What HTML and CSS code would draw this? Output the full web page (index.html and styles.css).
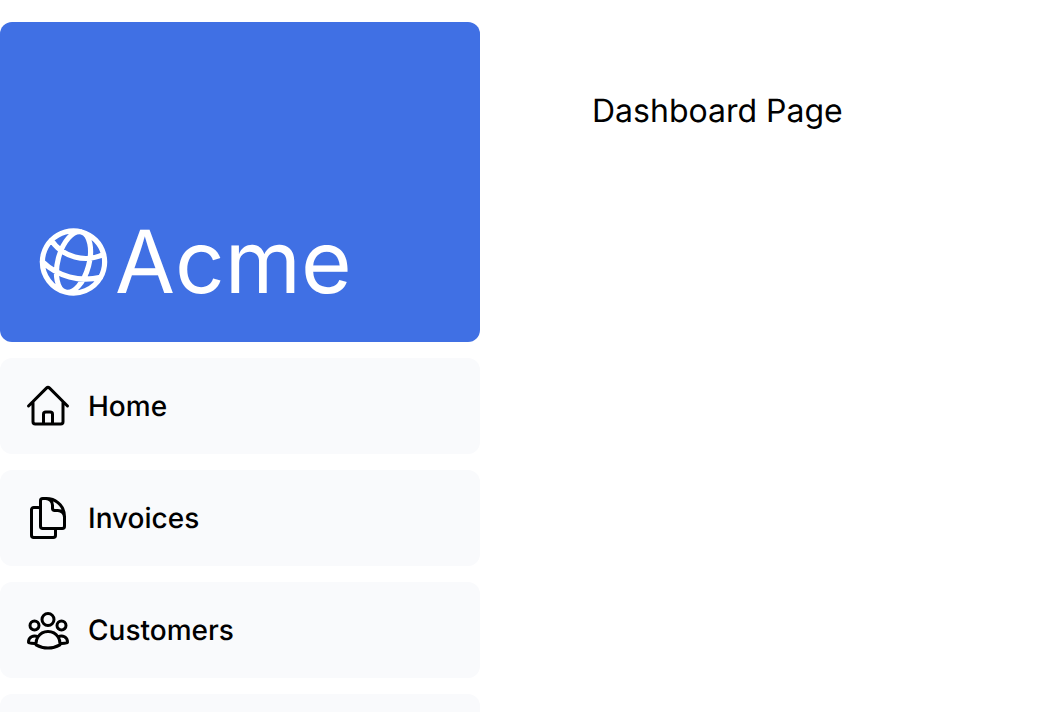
FILE: index.html
```html
<!DOCTYPE html>
<html lang="en">
<head>
<meta charset="utf-8">
<meta name="viewport" content="width=device-width, initial-scale=1">
<title>Acme Dashboard</title>
<link rel="stylesheet" href="styles.css">
</head>
<body>
<div class="layout">
  <aside class="sidebar">
    <a class="brand" href="#">
      <svg class="brand-icon" viewBox="0 0 24 24" fill="none" stroke="currentColor" stroke-width="1.5" stroke-linecap="round" stroke-linejoin="round" aria-hidden="true"><path d="M12 21a9.004 9.004 0 0 0 8.716-6.747M12 21a9.004 9.004 0 0 1-8.716-6.747M12 21c2.485 0 4.5-4.03 4.5-9S14.485 3 12 3m0 18c-2.485 0-4.5-4.03-4.5-9S9.515 3 12 3m0 0a8.997 8.997 0 0 1 7.843 4.582M12 3a8.997 8.997 0 0 0-7.843 4.582m15.686 0A11.953 11.953 0 0 1 12 10.5c-2.998 0-5.74-1.1-7.843-2.918m15.686 0A8.959 8.959 0 0 1 21 12c0 .778-.099 1.533-.284 2.253m0 0A17.919 17.919 0 0 1 12 16.5a17.92 17.92 0 0 1-8.716-2.247m0 0A9.015 9.015 0 0 1 3 12c0-1.605.42-3.113 1.157-4.418"/></svg>
      <span class="brand-name">Acme</span>
    </a>
    <nav class="nav">
      <a class="nav-link" href="#">
        <svg class="nav-icon" viewBox="0 0 24 24" aria-hidden="true"><path d="m2.25 12 8.954-8.955a1.126 1.126 0 0 1 1.591 0L21.75 12M4.5 9.75v10.125c0 .621.504 1.125 1.125 1.125H9.75v-4.875c0-.621.504-1.125 1.125-1.125h2.25c.621 0 1.125.504 1.125 1.125V21h4.125c.621 0 1.125-.504 1.125-1.125V9.75M8.25 21h8.25"/></svg>
        <span>Home</span>
      </a>
      <a class="nav-link" href="#">
        <svg class="nav-icon" viewBox="0 0 24 24" aria-hidden="true"><path d="M15.75 17.25v3.375c0 .621-.504 1.125-1.125 1.125h-9.75a1.125 1.125 0 0 1-1.125-1.125V7.875c0-.621.504-1.125 1.125-1.125H6.75a9.06 9.06 0 0 1 1.5.124m7.5 10.376h3.375c.621 0 1.125-.504 1.125-1.125V11.25c0-4.46-3.243-8.161-7.5-8.876a9.06 9.06 0 0 0-1.5-.124H9.375c-.621 0-1.125.504-1.125 1.125v3.5m7.5 10.375H9.375a1.125 1.125 0 0 1-1.125-1.125v-9.25m12 6.625v-1.875a3.375 3.375 0 0 0-3.375-3.375h-1.5a1.125 1.125 0 0 1-1.125-1.125v-1.5a3.375 3.375 0 0 0-3.375-3.375H9.75"/></svg>
        <span>Invoices</span>
      </a>
      <a class="nav-link" href="#">
        <svg class="nav-icon" viewBox="0 0 24 24" aria-hidden="true"><path d="M18 18.72a9.094 9.094 0 0 0 3.741-.479 3 3 0 0 0-4.682-2.72m.94 3.198.001.031c0 .225-.012.447-.037.666A11.944 11.944 0 0 1 12 21c-2.17 0-4.207-.576-5.963-1.584A6.062 6.062 0 0 1 6 18.719m12 0a5.971 5.971 0 0 0-.941-3.197m0 0A5.995 5.995 0 0 0 12 12.75a5.995 5.995 0 0 0-5.058 2.772m0 0a3 3 0 0 0-4.681 2.72 8.986 8.986 0 0 0 3.74.477m.94-3.197a5.971 5.971 0 0 0-.94 3.197M15 6.75a3 3 0 1 1-6 0 3 3 0 0 1 6 0Zm6 3a2.25 2.25 0 1 1-4.5 0 2.25 2.25 0 0 1 4.5 0Zm-13.5 0a2.25 2.25 0 1 1-4.5 0 2.25 2.25 0 0 1 4.5 0Z"/></svg>
        <span>Customers</span>
      </a>
      <div class="nav-filler"></div>
    </nav>
  </aside>
  <main class="content">
    <p class="page-title">Dashboard Page</p>
  </main>
</div>
</body>
</html>
```
FILE: styles.css
```css
* {
  box-sizing: border-box;
}

body {
  margin: 0;
  background: #fff;
  color: #000;
  font-family: Inter, "Liberation Sans", sans-serif;
  text-rendering: geometricPrecision;
}

.layout {
  display: flex;
  min-height: 100vh;
}

.sidebar {
  display: flex;
  flex: none;
  flex-direction: column;
  gap: 16px;
  width: 480px;
  padding-top: 22px;
}

.brand {
  display: flex;
  flex: none;
  align-items: flex-end;
  height: 320px;
  padding: 32px;
  border-radius: 12px;
  background: #4070e4;
  color: #fff;
  text-decoration: none;
}

.brand-icon {
  width: 83px;
  height: 96px;
  transform: rotate(15deg);
}

.brand-name {
  font-size: 87px;
  line-height: 96px;
}

.nav {
  display: flex;
  flex: 1;
  flex-direction: column;
  gap: 16px;
}

.nav-link {
  display: flex;
  align-items: center;
  gap: 16px;
  padding: 24px;
  border-radius: 12px;
  background: #f9fafc;
  color: #000;
  font-size: 28px;
  font-weight: 500;
  line-height: 40px;
  text-decoration: none;
}

.nav-icon {
  width: 48px;
  height: 48px;
  fill: none;
  stroke: currentColor;
  stroke-width: 1.5;
  stroke-linecap: round;
  stroke-linejoin: round;
}

.nav-filler {
  flex: 1;
  border-radius: 12px 12px 0 0;
  background: #f9fafc;
}

.content {
  flex: 1;
  padding: 88px 112px;
}

.page-title {
  margin: 0;
  font-size: 32px;
  line-height: 46px;
}
```
